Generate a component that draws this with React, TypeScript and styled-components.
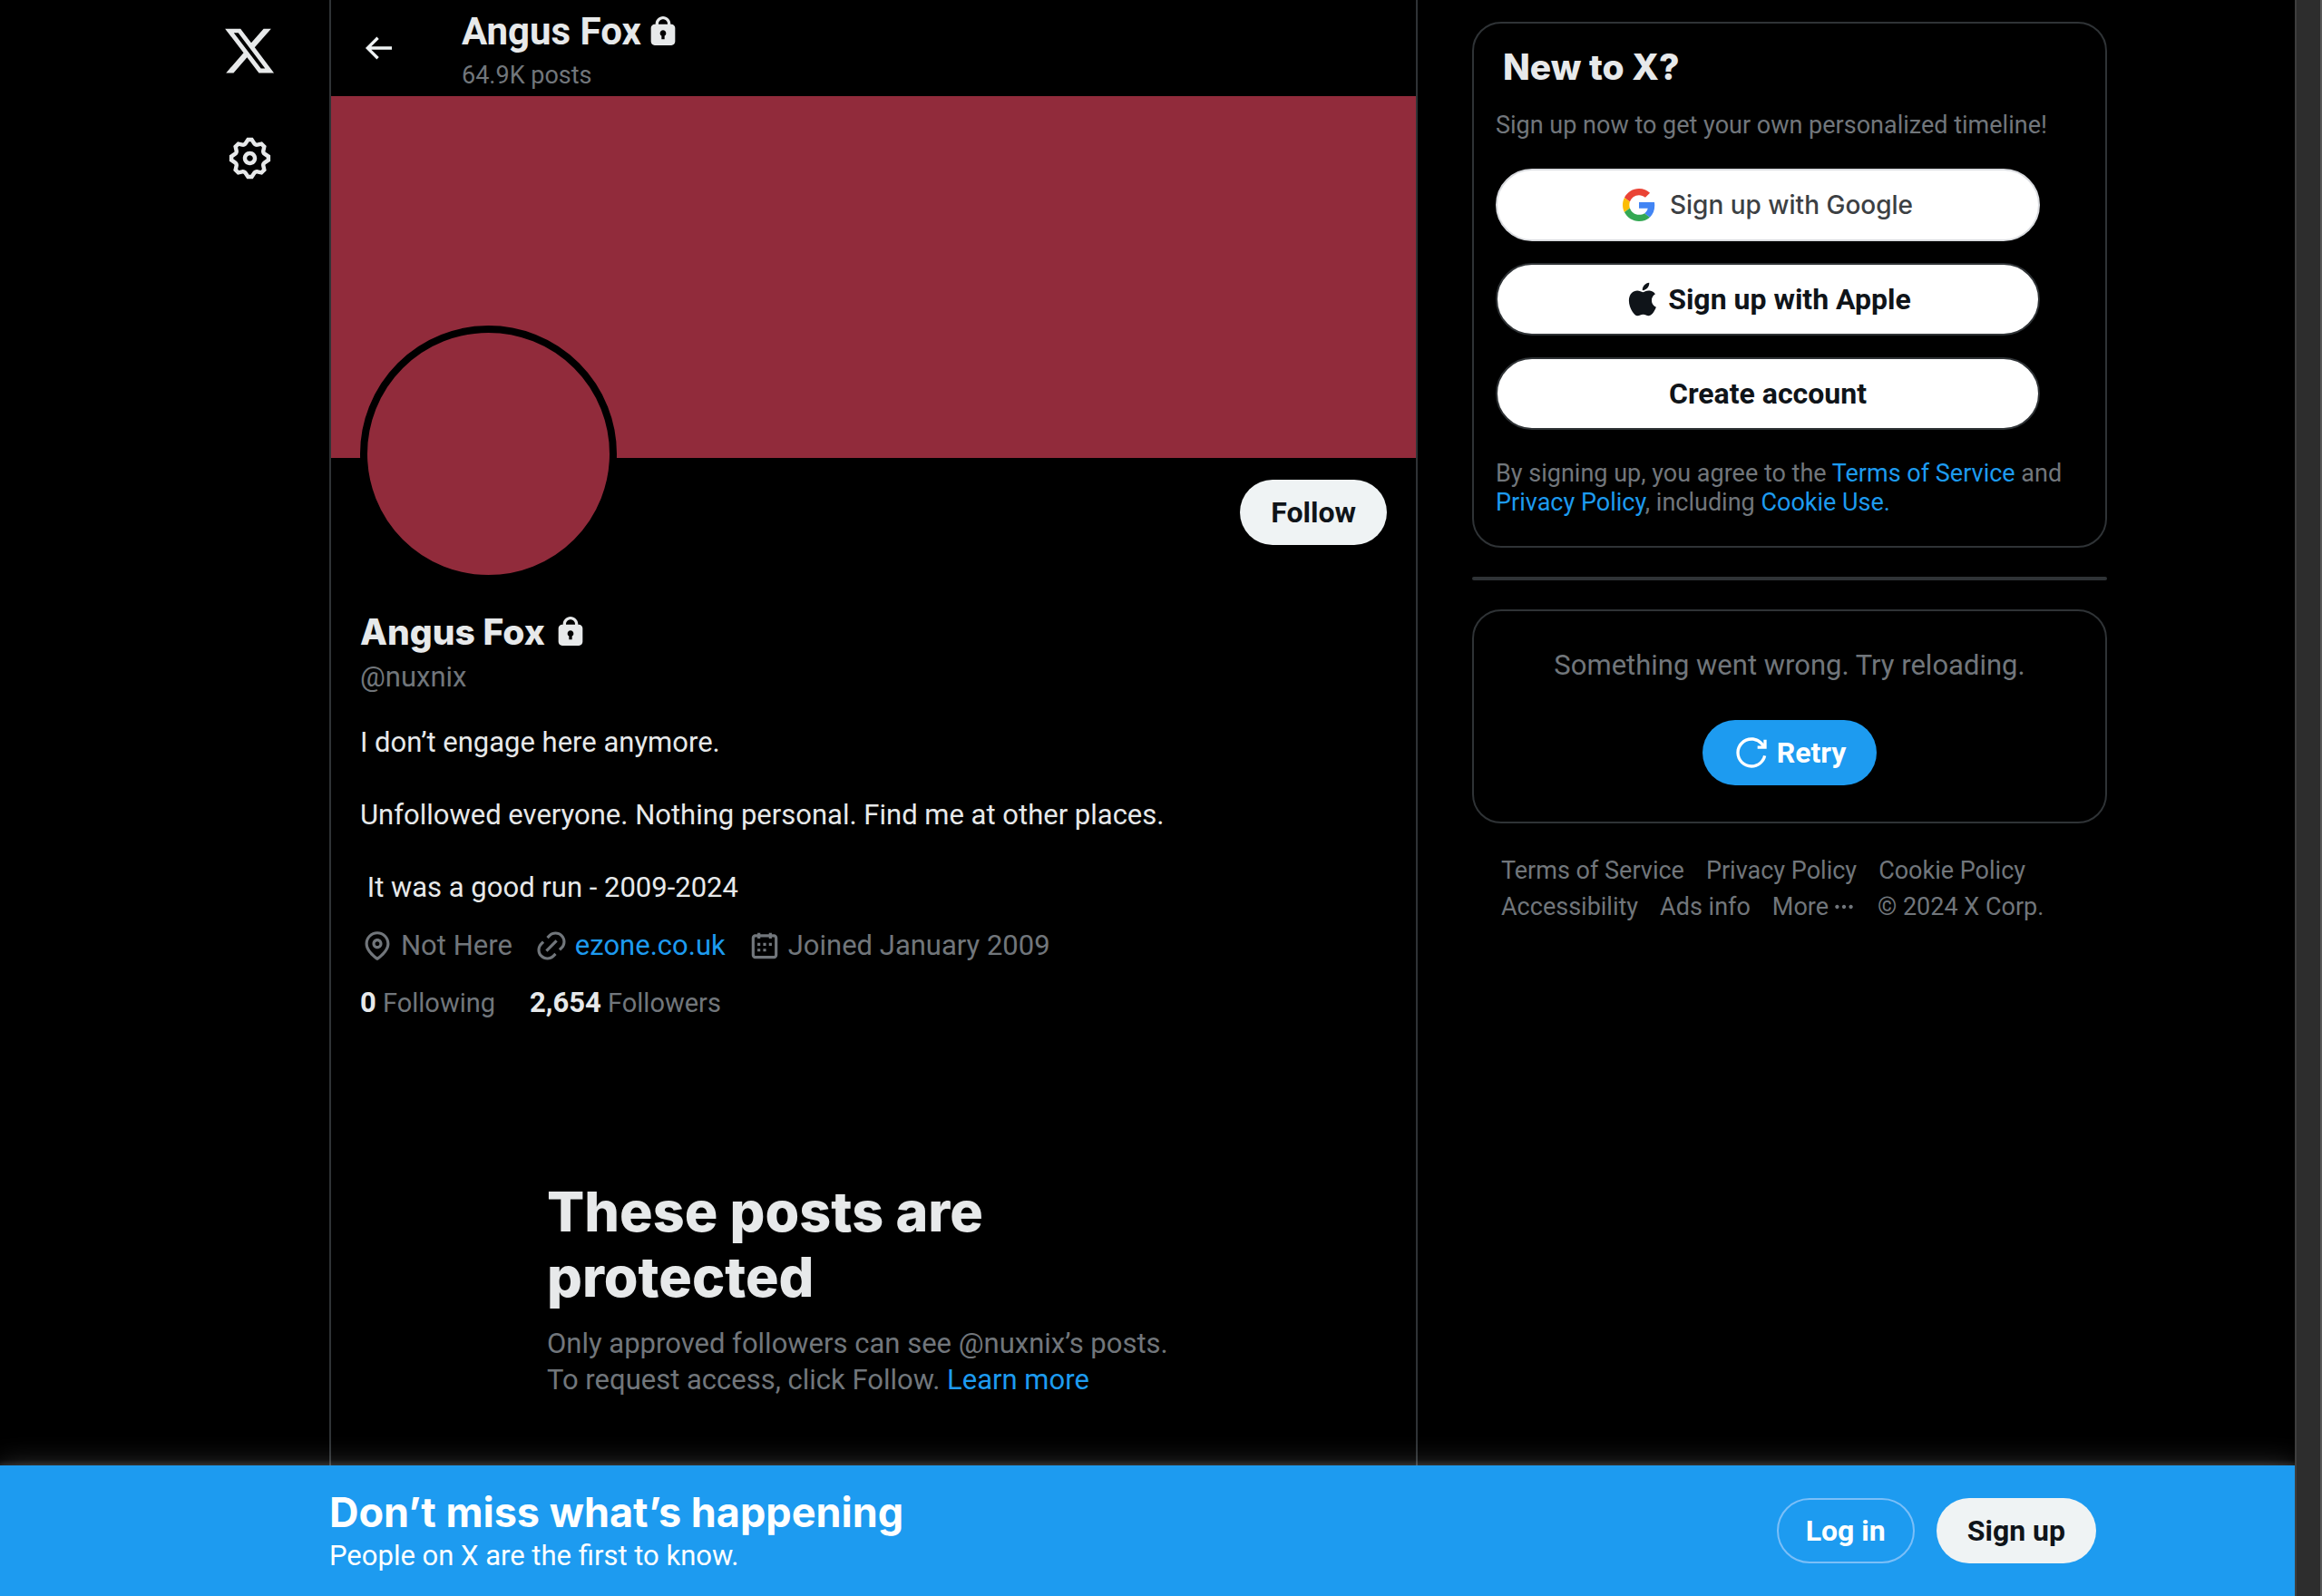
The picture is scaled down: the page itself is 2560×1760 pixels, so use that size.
import React from "react";
import styled, { createGlobalStyle } from "styled-components";

const Global = createGlobalStyle`
  *, *::before, *::after { box-sizing: border-box; }
  body { margin: 0; background: #000; color: #e7e9ea; overflow: hidden;
    font-family: Roboto, "Liberation Sans", sans-serif; font-size: 31px; line-height: 40px; }
  h1, h2, p, ul { margin: 0; padding: 0; }
  a { color: #1d9bf0; text-decoration: none; }
  button { font: inherit; cursor: pointer; }
`;

const display = `Inter, Roboto, "Liberation Sans", sans-serif`;

const Window = styled.div`
  display: flex;
  height: 100vh;
`;
const Viewport = styled.div`
  flex: 1;
  min-width: 0;
  display: flex;
  flex-direction: column;
`;
const Scrollbar = styled.div`
  position: relative;
  z-index: 2;
  width: 30px;
  background: #2d2d2d;
  border-left: 2px solid #3e3e3e;
  border-right: 2px solid #575757;
`;
const Page = styled.div`
  flex: 1;
  min-height: 0;
  overflow: hidden;
  display: grid;
  grid-template-columns: minmax(0, 363fr) 1200px minmax(0, 967fr);
`;
const Rail = styled.nav`
  display: flex;
  flex-direction: column;
  align-items: flex-end;
  gap: 62px;
  padding: 26px 58px 0 0;
`;
const RailLink = styled.a`
  display: flex;
  justify-content: center;
  width: 60px;
  color: #e7e9ea;
`;
const Icon = styled.svg<{ $size: number }>`
  width: ${(p) => p.$size}px;
  height: ${(p) => p.$size}px;
  fill: currentColor;
  flex: none;
`;
const Main = styled.main`
  border: solid #2f3336;
  border-width: 0 2px;
`;
const Header = styled.header`
  display: flex;
  align-items: center;
  gap: 72px;
  height: 106px;
  padding: 0 32px;
`;
const BackButton = styled.button`
  display: flex;
  padding: 0;
  border: 0;
  background: none;
  color: #eff3f4;
`;
const Title = styled.h2<{ $heavy?: boolean }>`
  display: flex;
  align-items: center;
  gap: ${(p) => (p.$heavy ? 8 : 4)}px;
  font-family: ${(p) => (p.$heavy ? display : "inherit")};
  font-size: ${(p) => (p.$heavy ? 39 : 42)}px;
  line-height: 48px;
  font-weight: ${(p) => (p.$heavy ? 800 : 700)};
`;
const Muted = styled.p<{ $small?: boolean }>`
  color: #71767b;
  font-size: ${(p) => (p.$small ? 27 : 31)}px;
  line-height: ${(p) => (p.$small ? 32 : 40)}px;
`;
const HeaderText = styled.div`
  display: flex;
  flex-direction: column;
  gap: 8px;
  padding-top: 4px;
`;
const Banner = styled.div`
  aspect-ratio: 3 / 1;
  background: #912b3b;
`;
const Profile = styled.section`
  padding: 24px 32px 0;
`;
const ProfileTop = styled.div`
  display: flex;
  justify-content: space-between;
  align-items: flex-start;
`;
const Avatar = styled.div`
  width: 25%;
  aspect-ratio: 1;
  margin-top: -170px;
  border: 8px solid #000;
  border-radius: 50%;
  background: #912b3b;
`;
const Pill = styled.button<{ $kind: "light" | "blue" | "outline" }>`
  display: inline-flex;
  align-items: center;
  justify-content: center;
  gap: 8px;
  height: 72px;
  padding: 0 ${(p) => (p.$kind === "outline" ? 30 : 32)}px;
  border: 2px solid ${(p) => (p.$kind === "outline" ? "#7bbff8" : "transparent")};
  border-radius: 36px;
  background: ${(p) => ({ light: "#eff3f4", blue: "#1d9bf0", outline: "transparent" })[p.$kind]} border-box;
  color: ${(p) => (p.$kind === "light" ? "#0f1419" : "#fff")};
  font-size: 32px;
  font-weight: 700;
`;
const Identity = styled.div`
  display: flex;
  flex-direction: column;
  gap: 6px;
  margin-top: 31px;
`;
const Bio = styled.p`
  margin-top: 32px;
  white-space: pre-wrap;
`;
const Meta = styled.ul`
  display: flex;
  gap: 24px;
  margin-top: 24px;
  list-style: none;
  color: #71767b;
`;
const MetaItem = styled.li`
  display: flex;
  align-items: center;
  gap: 7px;
`;
const Counts = styled.div`
  display: flex;
  gap: 38px;
  margin-top: 23px;
`;
const CountLink = styled.a`
  color: #71767b;
  font-size: 29px;
`;
const CountValue = styled.strong`
  color: #e7e9ea;
  font-size: 31px;
`;
const Empty = styled.section`
  width: 720px;
  margin: 174px auto 0;
`;
const EmptyTitle = styled.h1`
  margin-bottom: 18px;
  font-family: ${display};
  font-size: 61px;
  line-height: 72px;
  font-weight: 800;
`;
const Aside = styled.aside`
  padding: 24px 0 0 60px;
`;
const AsideColumn = styled.div`
  display: flex;
  flex-direction: column;
  gap: 32px;
  width: 700px;
`;
const Card = styled.section<{ $center?: boolean }>`
  display: flex;
  flex-direction: column;
  align-items: ${(p) => (p.$center ? "center" : "stretch")};
  gap: ${(p) => (p.$center ? 40 : 32)}px;
  padding: ${(p) => (p.$center ? "40px" : "24px 24px 32px")};
  border: 2px solid #2f3336;
  border-radius: 32px;
`;
const CardIntro = styled.div`
  display: flex;
  flex-direction: column;
  gap: 24px;
`;
const CardTitle = styled(Title)`
  padding-left: 8px;
`;
const SignUpOptions = styled.div`
  display: flex;
  flex-direction: column;
  gap: 24px;
`;
const Wide = styled.button<{ $google?: boolean }>`
  display: flex;
  align-items: center;
  justify-content: center;
  gap: ${(p) => (p.$google ? 16 : 8)}px;
  width: 600px;
  height: 80px;
  border: 2px solid ${(p) => (p.$google ? "#dadce0" : "#2f3336")};
  border-radius: 40px;
  background: #fff;
  color: ${(p) => (p.$google ? "#3c4043" : "#0f1419")};
  font-family: ${(p) => (p.$google ? display : "inherit")};
  font-size: ${(p) => (p.$google ? 28 : 32)}px;
  font-weight: ${(p) => (p.$google ? 500 : 700)};
`;
const Rule = styled.hr`
  width: 100%;
  height: 4px;
  margin: 0;
  border: 0;
  border-radius: 2px;
  background: #2f3336;
`;
const Footer = styled.nav`
  display: flex;
  flex-wrap: wrap;
  column-gap: 24px;
  padding: 0 32px;
  color: #71767b;
  font-size: 27px;
`;
const FooterLink = styled.a`
  display: inline-flex;
  align-items: center;
  gap: 4px;
  color: #71767b;
`;
const Bar = styled.footer`
  display: grid;
  grid-template-columns: minmax(0, 363fr) 1948px minmax(0, 219fr);
  align-items: center;
  height: 144px;
  background: #1d9bf0;
  color: #fff;
  z-index: 1;
  box-shadow: 0 0 30px rgba(255, 255, 255, 0.2), 0 0 6px 2px rgba(255, 255, 255, 0.15);
`;
const BarInner = styled.div`
  grid-column: 2;
  display: flex;
  align-items: center;
  justify-content: space-between;
`;
const BarTitle = styled.h2`
  font-family: ${display};
  font-size: 45px;
  line-height: 56px;
  font-weight: 700;
`;
const BarActions = styled.div`
  display: flex;
  gap: 24px;
`;

const paths = {
  x: "M18.244 2.25h3.308l-7.227 8.26 8.502 11.24H16.17l-5.214-6.817L4.99 21.75H1.68l7.73-8.835L1.254 2.25H8.08l4.713 6.231zm-1.161 17.52h1.833L7.084 4.126H5.117z",
  gear: "M10.54 1.75h2.92l1.57 2.36c.11.17.32.25.53.21l2.53-.59 2.17 2.17-.58 2.54c-.05.2.04.41.21.53l2.36 1.57v2.92l-2.36 1.57c-.17.12-.26.33-.21.53l.58 2.54-2.17 2.17-2.53-.59c-.21-.04-.42.04-.53.21l-1.57 2.36h-2.92l-1.58-2.36c-.11-.17-.32-.25-.52-.21l-2.54.59-2.17-2.17.58-2.54c.05-.2-.03-.41-.21-.53l-2.35-1.57v-2.92L4.1 8.97c.18-.12.26-.33.21-.53L3.73 5.9 5.9 3.73l2.54.59c.2.04.41-.04.52-.21l1.58-2.36zm1.07 2l-.98 1.47C10.05 6.08 9 6.5 7.99 6.27l-1.46-.34-.6.6.33 1.46c.24 1.01-.18 2.07-1.05 2.64l-1.46.98v.78l1.46.98c.87.57 1.29 1.63 1.05 2.64l-.33 1.46.6.6 1.46-.34c1.01-.23 2.06.19 2.64 1.05l.98 1.47h.78l.97-1.47c.58-.86 1.63-1.28 2.65-1.05l1.45.34.61-.6-.34-1.46c-.23-1.01.18-2.07 1.05-2.64l1.47-.98v-.78l-1.47-.98c-.87-.57-1.28-1.63-1.05-2.64l.34-1.46-.61-.6-1.45.34c-1.02.23-2.07-.19-2.65-1.05l-.97-1.47h-.78zM12 10.5c-.83 0-1.5.67-1.5 1.5s.67 1.5 1.5 1.5c.82 0 1.5-.67 1.5-1.5s-.68-1.5-1.5-1.5zM8.5 12c0-1.93 1.56-3.5 3.5-3.5 1.93 0 3.5 1.57 3.5 3.5s-1.57 3.5-3.5 3.5c-1.94 0-3.5-1.57-3.5-3.5z",
  back: "M7.414 13l5.043 5.04-1.414 1.42L3.586 12l7.457-7.46 1.414 1.42L7.414 11H21v2H7.414z",
  lock: "M17.5 7H17v-.25c0-2.76-2.24-5-5-5s-5 2.24-5 5V7h-.5C5.12 7 4 8.12 4 9.5v9C4 19.88 5.12 21 6.5 21h11c1.39 0 2.5-1.12 2.5-2.5v-9C20 8.12 18.89 7 17.5 7zM13 14.73V17h-2v-2.27c-.59-.34-1-.99-1-1.73 0-1.1.9-2 2-2 1.11 0 2 .9 2 2 0 .74-.4 1.39-1 1.73zM15 7H9v-.25c0-1.66 1.35-3 3-3 1.66 0 3 1.34 3 3V7z",
  pin: "M12 7c-1.93 0-3.5 1.57-3.5 3.5S10.07 14 12 14s3.5-1.57 3.5-3.5S13.93 7 12 7zm0 5c-.827 0-1.5-.673-1.5-1.5S11.173 9 12 9s1.5.673 1.5 1.5S12.827 12 12 12zm0-10c-4.687 0-8.5 3.813-8.5 8.5 0 5.967 7.621 11.116 7.945 11.332l.555.37.555-.37c.324-.216 7.945-5.365 7.945-11.332C20.5 5.813 16.687 2 12 2zm0 17.77c-1.665-1.241-6.5-5.196-6.5-9.27C5.5 6.916 8.416 4 12 4s6.5 2.916 6.5 6.5c0 4.073-4.835 8.028-6.5 9.27z",
  link: "M18.36 5.64c-1.95-1.96-5.11-1.96-7.07 0L9.88 7.05 8.46 5.64l1.42-1.42c2.73-2.73 7.16-2.73 9.9 0 2.73 2.74 2.73 7.17 0 9.9l-1.42 1.42-1.41-1.42 1.41-1.41c1.96-1.96 1.96-5.12 0-7.07zm-2.12 3.53l-7.07 7.07-1.41-1.41 7.07-7.07 1.41 1.41zm-12.02.71l1.42-1.42 1.41 1.42-1.41 1.41c-1.96 1.96-1.96 5.12 0 7.07 1.95 1.96 5.11 1.96 7.07 0l1.41-1.41 1.42 1.41-1.42 1.42c-2.73 2.73-7.16 2.73-9.9 0-2.73-2.74-2.73-7.17 0-9.9z",
  calendar: "M7 4V3h2v1h6V3h2v1h1.5C19.89 4 21 5.12 21 6.5v12c0 1.38-1.11 2.5-2.5 2.5h-13C4.12 21 3 19.88 3 18.5v-12C3 5.12 4.12 4 5.5 4H7zm0 2H5.5c-.27 0-.5.22-.5.5v12c0 .28.23.5.5.5h13c.28 0 .5-.22.5-.5v-12c0-.28-.22-.5-.5-.5H17v1h-2V6H9v1H7V6zm0 6h2v-2H7v2zm0 4h2v-2H7v2zm4-4h2v-2h-2v2zm0 4h2v-2h-2v2zm4-4h2v-2h-2v2z",
  retry: "M12 4c-4.418 0-8 3.58-8 8s3.582 8 8 8c3.806 0 6.993-2.66 7.802-6.22l1.95.44C20.742 18.67 16.76 22 12 22 6.477 22 2 17.52 2 12S6.477 2 12 2c3.272 0 6.176 1.57 8 4V3.5h2v6h-6v-2h2.616C17.175 5.39 14.749 4 12 4z",
  more: "M3 12c0-1.1.9-2 2-2s2 .9 2 2-.9 2-2 2-2-.9-2-2zm9 2c1.1 0 2-.9 2-2s-.9-2-2-2-2 .9-2 2 .9 2 2 2zm7 0c1.1 0 2-.9 2-2s-.9-2-2-2-2 .9-2 2 .9 2 2 2z",
  apple: "M16.365 1.43c0 1.14-.493 2.27-1.177 3.08-.744.9-1.99 1.57-2.987 1.57-.12 0-.23-.02-.3-.03-.01-.06-.04-.22-.04-.39 0-1.15.572-2.27 1.206-2.98.804-.94 2.142-1.64 3.248-1.68.03.13.05.28.05.43zm4.565 15.71c-.03.07-.463 1.58-1.518 3.12-.945 1.34-1.94 2.71-3.43 2.71-1.517 0-1.9-.88-3.63-.88-1.698 0-2.302.91-3.67.91-1.377 0-2.332-1.26-3.428-2.8-1.287-1.82-2.323-4.63-2.323-7.28 0-4.28 2.797-6.55 5.552-6.55 1.448 0 2.675.95 3.6.95.865 0 2.222-1.01 3.902-1.01.613 0 2.886.06 4.374 2.19-.13.09-2.383 1.37-2.383 4.19 0 3.26 2.854 4.42 2.955 4.45z",
};

function Glyph({ name, size, label }: { name: keyof typeof paths; size: number; label?: string }) {
  return (
    <Icon viewBox="0 0 24 24" $size={size} role={label ? "img" : undefined} aria-label={label} aria-hidden={!label}>
      <path d={paths[name]} />
    </Icon>
  );
}

function GoogleMark() {
  return (
    <Icon viewBox="0 0 48 48" $size={36} aria-hidden>
      <path fill="#EA4335" d="M24 9.5c3.54 0 6.71 1.22 9.21 3.6l6.85-6.85C35.9 2.38 30.47 0 24 0 14.62 0 6.51 5.38 2.56 13.22l7.98 6.19C12.43 13.72 17.74 9.5 24 9.5z" />
      <path fill="#4285F4" d="M46.98 24.55c0-1.57-.15-3.09-.38-4.55H24v9.02h12.94c-.58 2.96-2.26 5.48-4.78 7.18l7.73 6c4.51-4.18 7.09-10.36 7.09-17.65z" />
      <path fill="#FBBC05" d="M10.53 28.59c-.48-1.45-.76-2.99-.76-4.59s.27-3.14.76-4.59l-7.98-6.19C.92 16.46 0 20.12 0 24c0 3.88.92 7.54 2.56 10.78l7.97-6.19z" />
      <path fill="#34A853" d="M24 48c6.48 0 11.93-2.13 15.89-5.81l-7.73-6c-2.15 1.45-4.92 2.3-8.16 2.3-6.26 0-11.57-4.22-13.47-9.91l-7.98 6.19C6.51 42.62 14.62 48 24 48z" />
    </Icon>
  );
}

export default function App() {
  return (
    <>
      <Global />
      <Window>
        <Viewport>
          <Page>
            <Rail>
              <RailLink href="#" aria-label="X"><Glyph name="x" size={60} /></RailLink>
              <RailLink href="#" aria-label="Settings"><Glyph name="gear" size={53} /></RailLink>
            </Rail>
            <Main>
              <Header>
                <BackButton aria-label="Back"><Glyph name="back" size={40} /></BackButton>
                <HeaderText>
                  <Title>Angus Fox<Glyph name="lock" size={40} label="Protected account" /></Title>
                  <Muted $small>64.9K posts</Muted>
                </HeaderText>
              </Header>
              <Banner />
              <Profile>
                <ProfileTop>
                  <Avatar />
                  <Pill $kind="light">Follow</Pill>
                </ProfileTop>
                <Identity>
                  <Title $heavy>Angus Fox<Glyph name="lock" size={40} label="Protected account" /></Title>
                  <Muted>@nuxnix</Muted>
                </Identity>
                <Bio>{"I don’t engage here anymore.\n\nUnfollowed everyone. Nothing personal. Find me at other places.\n\n It was a good run - 2009-2024"}</Bio>
                <Meta>
                  <MetaItem><Glyph name="pin" size={38} />Not Here</MetaItem>
                  <MetaItem><Glyph name="link" size={38} /><a href="#">ezone.co.uk</a></MetaItem>
                  <MetaItem><Glyph name="calendar" size={38} />Joined January 2009</MetaItem>
                </Meta>
                <Counts>
                  <CountLink href="#"><CountValue>0</CountValue> Following</CountLink>
                  <CountLink href="#"><CountValue>2,654</CountValue> Followers</CountLink>
                </Counts>
              </Profile>
              <Empty>
                <EmptyTitle>These posts are<br />protected</EmptyTitle>
                <Muted>
                  Only approved followers can see @nuxnix’s posts.<br />
                  To request access, click Follow. <a href="#">Learn more</a>
                </Muted>
              </Empty>
            </Main>
            <Aside>
              <AsideColumn>
                <Card>
                  <CardIntro>
                    <CardTitle $heavy>New to X?</CardTitle>
                    <Muted $small>Sign up now to get your own personalized timeline!</Muted>
                  </CardIntro>
                  <SignUpOptions>
                    <Wide $google><GoogleMark />Sign up with Google</Wide>
                    <Wide><Glyph name="apple" size={40} />Sign up with Apple</Wide>
                    <Wide>Create account</Wide>
                  </SignUpOptions>
                  <Muted $small>
                    By signing up, you agree to the <a href="#">Terms of Service</a> and <a href="#">Privacy Policy</a>, including <a href="#">Cookie Use.</a>
                  </Muted>
                </Card>
                <Rule />
                <Card $center>
                  <Muted>Something went wrong. Try reloading.</Muted>
                  <Pill $kind="blue"><Glyph name="retry" size={40} />Retry</Pill>
                </Card>
                <Footer>
                  <FooterLink href="#">Terms of Service</FooterLink>
                  <FooterLink href="#">Privacy Policy</FooterLink>
                  <FooterLink href="#">Cookie Policy</FooterLink>
                  <FooterLink href="#">Accessibility</FooterLink>
                  <FooterLink href="#">Ads info</FooterLink>
                  <FooterLink href="#">More<Glyph name="more" size={26} /></FooterLink>
                  <span>© 2024 X Corp.</span>
                </Footer>
              </AsideColumn>
            </Aside>
          </Page>
          <Bar>
            <BarInner>
              <div>
                <BarTitle>Don’t miss what’s happening</BarTitle>
                <p>People on X are the first to know.</p>
              </div>
              <BarActions>
                <Pill $kind="outline">Log in</Pill>
                <Pill $kind="light">Sign up</Pill>
              </BarActions>
            </BarInner>
          </Bar>
        </Viewport>
        <Scrollbar />
      </Window>
    </>
  );
}
